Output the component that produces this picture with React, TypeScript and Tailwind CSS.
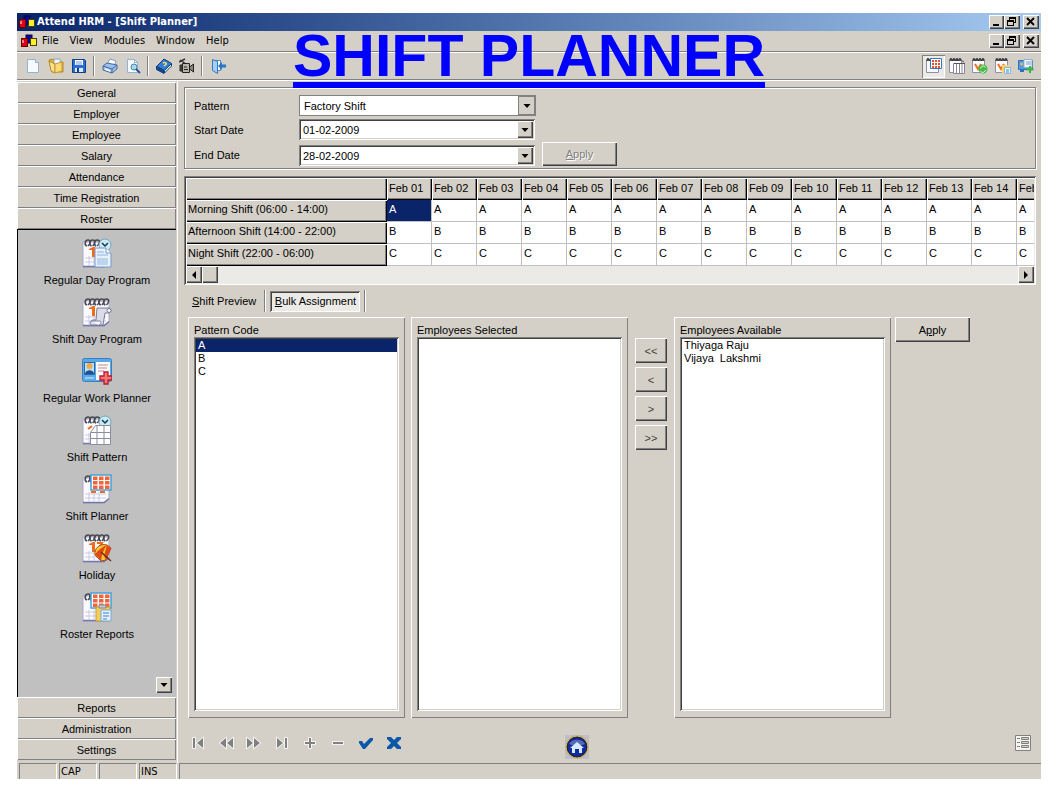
import { useState } from 'react'
import type { ReactNode } from 'react'

// bevels shared by the classic controls
const raised = 'bg-[#d4d0c8] shadow-[inset_1px_1px_0_#fff,inset_-1px_-1px_0_#404040,inset_-2px_-2px_0_#808080]'
const raisedThin = 'bg-[#d4d0c8] shadow-[inset_1px_1px_0_#fff,inset_-1px_-1px_0_#808080]'
const sunken = 'bg-white shadow-[inset_1px_1px_0_#808080,inset_-1px_-1px_0_#fff,inset_2px_2px_0_#404040,inset_-2px_-2px_0_#d4d0c8]'

const topModules = ['General', 'Employer', 'Employee', 'Salary', 'Attendance', 'Time Registration', 'Roster']
const bottomModules = ['Reports', 'Administration', 'Settings']

const days = ['01', '02', '03', '04', '05', '06', '07', '08', '09', '10', '11', '12', '13', '14', '15']

const shifts = [
    { name: 'Morning Shift (06:00 - 14:00)', code: 'A' },
    { name: 'Afternoon Shift (14:00 - 22:00)', code: 'B' },
    { name: 'Night Shift (22:00 - 06:00)', code: 'C' },
]

/* ---------- ICONS ---------- */

function AppIcon({ size }: { size: number }) {
    return (
        <svg width={size} height={size} viewBox="0 0 16 16">
            <rect x="5" y="2" width="6" height="8" fill="#00009c" stroke="#000040" />
            <rect x="0.500" y="5.500" width="6" height="8" fill="#e00010" stroke="#600" />
            <path d="M2 7v3" stroke="#fff" />
            <rect x="9.500" y="5.500" width="6" height="7" fill="#ffee30" stroke="#404000" />
        </svg>
    )
}

function Spirals({ count = 5 }: { count?: number }) {
    return (
        <g fill="none" stroke="#4a4a55" strokeWidth="1.600">
            {Array.from({ length: count }, (_, i) => (
                <path key={i} d={`M${5 + i * 4.600} 8c-3-1-2-6 1-6s3 3 0 6`} />
            ))}
        </g>
    )
}

function CalendarBase({ spirals = 5, digit = true }: { spirals?: number; digit?: boolean }) {
    return (
        <>
            <path d="M1 4h26v21l-4 4H1z" fill="#fbfbff" stroke="#a9a9c6" />
            <path d="M1 28.500h21l5-4" fill="none" stroke="#7378a8" strokeWidth="1.500" />
            <path d="M3 20h21M3 24h21M7 18v10M12 18v10M17 18v10" stroke="#c9c9e4" />
            {digit && <path d="M7 11l4-2h2v10h-3v-7H7z" fill="#f26a1b" />}
            <Spirals count={spirals} />
        </>
    )
}

function RedGrid() {
    return (
        <>
            <rect x="9" y="1" width="20" height="15" fill="#fff" stroke="#45a0dc" strokeWidth="1.500" />
            {[0, 1, 2].map((r) =>
                [0, 1, 2].map((c) => (
                    <rect key={`${r}${c}`} x={11 + c * 6} y={2.500 + r * 4.500} width="4.500" height="3.500" fill="#f0653c" />
                ))
            )}
        </>
    )
}

function Clock() {
    return (
        <>
            <circle cx="23" cy="7" r="6" fill="#c9ecf4" stroke="#74a6bd" />
            <path d="M20 5l3 3 3-3" fill="none" stroke="#183848" strokeWidth="1.500" />
        </>
    )
}

function Big({ children }: { children: ReactNode }) {
    return <svg width="30" height="30" viewBox="0 0 30 30">{children}</svg>
}

function RegularDayIcon() {
    return (
        <Big>
            <CalendarBase spirals={3} />
            <Clock />
            <path d="M13 10h11l5 5v14H13z" fill="#e8f2fc" stroke="#7898c8" />
            <path d="M24 10v5h5" fill="#fff" stroke="#7898c8" />
            <path d="M15 14h7M15 17h11" stroke="#8fb2dc" />
            <rect x="15" y="20" width="11" height="7" fill="#bdd4ee" />
        </Big>
    )
}

function ShiftDayIcon() {
    return (
        <Big>
            <CalendarBase />
            <path d="M15 11h12c3 1 2 5-1 5h-3l-2 12H9c-2-2 0-5 2-5h3z" fill="#dcdce8" stroke="#777b98" />
            <circle cx="27" cy="13.500" r="2" fill="#fff" stroke="#777b98" />
            <path d="M9 24h9c2 1 1 3-1 4" fill="#f8f8ff" stroke="#777b98" />
        </Big>
    )
}

function WorkPlannerIcon() {
    return (
        <Big>
            <rect x="0.500" y="2.500" width="29" height="23" rx="2" fill="#5aa9e6" stroke="#3b7fc0" />
            <rect x="14" y="6" width="14" height="18" fill="#f6fbff" />
            <rect x="2.500" y="6.500" width="10" height="12" fill="#b9e1fa" stroke="#2d69a8" />
            <circle cx="7.500" cy="10" r="3" fill="#f0a848" />
            <path d="M3 18c0-5 9-5 9 0z" fill="#234f8c" />
            <path d="M16 9h10M16 12h9M16 15h6" stroke="#c88" />
            <path d="M3 22h9" stroke="#d8f0ff" />
            <path d="M22 16h4v4h4v4h-4v4h-4v-4h-4v-4h4z" fill="#f07878" stroke="#c01828" strokeWidth="1.300" />
        </Big>
    )
}

function ShiftPatternIcon() {
    return (
        <Big>
            <CalendarBase spirals={3} digit={false} />
            <path d="M6 14l4-3" stroke="#f26a1b" strokeWidth="2" />
            <Clock />
            <path d="M8.500 17.500l5-7h15v19h-20z" fill="#fff" stroke="#8c8ca0" />
            <path d="M9 17.500h19M9 23.500h19M15 11v18M22 11v18" stroke="#8c8ca0" />
        </Big>
    )
}

function ShiftPlannerIcon() {
    return (
        <Big>
            <CalendarBase spirals={2} digit={false} />
            <path d="M9 18h5M18 18h5" stroke="#f26a1b" strokeWidth="2" />
            <RedGrid />
        </Big>
    )
}

function HolidayIcon() {
    return (
        <Big>
            <CalendarBase />
            <path d="M15 10h5l-4 7" fill="none" stroke="#f26a1b" strokeWidth="2" />
            <path d="M13 22c-1-7 5-12 12-10l4 3-5 12-5 1z" fill="#f6c832" stroke="#a84810" />
            <path d="M13 22c2-4 7-8 12-10-3 4-5 8-6 16l-3-4zM25 12l4 3-5 12-2-4z" fill="#e04818" />
            <path d="M19 19l10 9" stroke="#703010" strokeWidth="1.500" />
        </Big>
    )
}

function RosterReportsIcon() {
    return (
        <Big>
            <CalendarBase spirals={2} digit={false} />
            <RedGrid />
            <path d="M14 15h14v14H14z" fill="#f0cf60" stroke="#c8a030" />
            <path d="M17 13h7v3h-7z" fill="#c8c8d0" stroke="#888" />
            <path d="M19 18h10v11H19z" fill="#e6f3ff" stroke="#78a8d8" />
            <path d="M21 21h6M21 24h6M21 27h4" stroke="#3c7cc8" />
        </Big>
    )
}

const rosterItems = [
    { icon: RegularDayIcon, label: 'Regular Day Program' },
    { icon: ShiftDayIcon, label: 'Shift Day Program' },
    { icon: WorkPlannerIcon, label: 'Regular Work Planner' },
    { icon: ShiftPatternIcon, label: 'Shift Pattern' },
    { icon: ShiftPlannerIcon, label: 'Shift Planner' },
    { icon: HolidayIcon, label: 'Holiday' },
    { icon: RosterReportsIcon, label: 'Roster Reports' },
]

function Small({ children }: { children: ReactNode }) {
    return <svg width="16" height="16" viewBox="0 0 16 16">{children}</svg>
}

const newIcon = (
    <Small>
        <path d="M2.500 1.500h8l3 3v10h-11z" fill="#f7fbff" stroke="#8fb4d8" />
        <path d="M10.500 1.500v3h3" fill="#cfe2f4" stroke="#8fb4d8" />
    </Small>
)
const openIcon = (
    <Small>
        <path d="M1 2l4-1 2 3h8v10H4z" fill="#e3b33c" stroke="#b58a28" />
        <path d="M6 1h6l1 9H6z" fill="#eef5fc" stroke="#88a8c8" />
        <path d="M1 3l6 3v9l-4-2z" fill="#fbe08a" stroke="#b58a28" />
        <path d="M7 6l7-2v9l-7 2z" fill="#f8da78" stroke="#c89a30" />
    </Small>
)
const saveIcon = (
    <Small>
        <path d="M1.500 1.500h12l1 1v12h-13z" fill="#2c6fd0" stroke="#123f8c" />
        <path d="M4 2h8v5H4z" fill="#fff" />
        <path d="M5 4h6M5 6h6" stroke="#6f9cd8" />
        <path d="M4 10h8v4H4z" fill="#dceaff" />
        <path d="M6 10h2v4H6z" fill="#123f8c" />
    </Small>
)
const printIcon = (
    <Small>
        <path d="M5 6l3-5 6 2-2 5z" fill="#fff" stroke="#7f9cc0" />
        <path d="M1 8l4-3 10 2v4l-5 4-9-3z" fill="#9fc0ea" stroke="#41699f" />
        <path d="M1 8l9 3 5-4M10 11v4" fill="none" stroke="#41699f" />
        <path d="M3 11l5 2" stroke="#fff" strokeWidth="1.500" />
    </Small>
)
const previewIcon = (
    <Small>
        <path d="M2.500 1.500h7l3 3v10h-10z" fill="#f5faff" stroke="#8fb4d8" />
        <path d="M9.500 1.500v3h3" fill="none" stroke="#8fb4d8" />
        <circle cx="9" cy="9" r="3" fill="#a9d8e8" stroke="#4884a8" />
        <path d="M11 11l4 4" stroke="#2b50a0" strokeWidth="2" />
    </Small>
)
const bookIcon = (
    <Small>
        <path d="M0.500 8.500L8 1l7.500 4.500-7 7z" fill="#2f7dd4" stroke="#103c78" />
        <path d="M0.500 8.500v3l7.500 4v-3z" fill="#154a90" stroke="#103c78" />
        <path d="M8.500 12.500l7-7v2.500l-7 7z" fill="#f4f4e8" stroke="#103c78" />
        <path d="M7 5c2-1 4 0 3 1.500L8 8" fill="none" stroke="#ffe060" strokeWidth="1.500" />
    </Small>
)
const cameraIcon = (
    <Small>
        <path d="M0 4l6-3M1 2l6 4" stroke="#333" strokeWidth="1.500" />
        <path d="M3.500 5.500h7v9h-7z" fill="#b8b4a8" stroke="#222" />
        <path d="M10.500 9l4-3v8l-4-3z" fill="#888478" stroke="#222" />
        <path d="M1 7h2v6H1zM5 9h3M5 11.500h4" fill="#555" stroke="#222" />
    </Small>
)
const exitIcon = (
    <Small>
        <path d="M2.500 2.500h8v10h-8z" fill="#fff" stroke="#4d88c8" />
        <path d="M2.500 1.500l5 2v12l-5-3z" fill="#a6cdf2" stroke="#3c78bc" />
        <path d="M8 8l4-4v2.500h4v3h-4V12z" fill="#2775cc" />
    </Small>
)

function Page({ children }: { children?: ReactNode }) {
    return (
        <Small>
            <path d="M0.500 2.500h12v12h-12z" fill="#fafaff" stroke="#9090a8" />
            <path d="M1 3c0-3 2-3 2 0M4 3c0-3 2-3 2 0M7 3c0-3 2-3 2 0M10 3c0-3 2-3 2 0" fill="none" stroke="#333" strokeWidth="1.300" />
            {children}
        </Small>
    )
}

const viewIcons = [
    {
        label: 'Shift planner view',
        icon: (
            <Page>
                <path d="M4.500 0.500h11v10h-11z" fill="#fff" stroke="#2b7cc4" />
                <path d="M6 2h2v2H6zM9 2h2v2H9zM12 2h2v2h-2zM6 5h2v2H6zM9 5h2v2H9zM12 5h2v2h-2zM6 8h2v2H6zM9 8h2v2H9zM12 8h2v2h-2z" fill="#e8502c" />
            </Page>
        ),
    },
    {
        label: 'Shift pattern view',
        icon: (
            <Page>
                <path d="M4.500 5.500h11v10h-11zM7.500 6v9M10.500 6v9M13 6v9" fill="#fff" stroke="#858595" />
                <path d="M10 1l5 3M5 5.500h11" stroke="#555" />
            </Page>
        ),
    },
    {
        label: 'Refresh roster',
        icon: (
            <Page>
                <path d="M3 6l3 5 3-5" fill="none" stroke="#f07020" strokeWidth="2" />
                <circle cx="11" cy="11" r="4.500" fill="#48b848" />
                <path d="M8.500 10.500c1-3 4-3 5-1M13.500 12c-1 3-4 3-5 1" fill="none" stroke="#e8ffe8" />
            </Page>
        ),
    },
    {
        label: 'Roster report',
        icon: (
            <Page>
                <path d="M3 6l3 5 3-5" fill="none" stroke="#f07020" strokeWidth="2" />
                <path d="M7 7h7v8H7z" fill="#f5d468" />
                <path d="M9.500 9.500h6v6h-6z" fill="#eef7ff" stroke="#88b4e0" />
                <path d="M11 12h3M11 14h3" stroke="#4484c8" />
            </Page>
        ),
    },
    {
        label: 'Add work plan',
        icon: (
            <Small>
                <path d="M0.500 2.500h14v9H0.500z" fill="#4c9ce0" stroke="#2d70b4" />
                <path d="M6 1.500h8v8H6z" fill="#f4f9ff" stroke="#90b0d0" />
                <path d="M8 4h5M8 6h5" stroke="#7098c8" />
                <circle cx="3.500" cy="6" r="1.500" fill="#f0b060" />
                <path d="M2 12h4v2H2z" fill="#2d70b4" />
                <path d="M12 8v7M8.500 11.500h7" stroke="#38b838" strokeWidth="2" />
            </Small>
        ),
    },
]

const fileTools = [
    [
        { label: 'New', icon: newIcon },
        { label: 'Open', icon: openIcon },
        { label: 'Save', icon: saveIcon },
    ],
    [
        { label: 'Print', icon: printIcon },
        { label: 'Preview', icon: previewIcon },
    ],
    [
        { label: 'Help contents', icon: bookIcon },
        { label: 'Demo', icon: cameraIcon },
    ],
    [{ label: 'Exit', icon: exitIcon }],
]

const recordTools = [
    { label: 'First', d: 'M3 3h2v10H3zM13 3v10L7 8z' },
    { label: 'Previous', d: 'M8 3v10L2 8zM15 3v10L9 8z' },
    { label: 'Next', d: 'M1 3v10l6-5zM8 3v10l6-5z' },
    { label: 'Last', d: 'M3 3v10l6-5zM11 3h2v10h-2z' },
    { label: 'Add', d: 'M7 3h2v4h4v2H9v4H7V9H3V7h4z' },
    { label: 'Remove', d: 'M3 7h10v2H3z' },
]

/* ---------- CONTROLS ---------- */

function WindowButtons() {
    return (
        <div className="flex">
            <button aria-label="Minimize" className={`flex h-[14px] w-[15px] ${raised}`}>
                <svg width="15" height="14" viewBox="0 0 15 14"><path d="M4 9h6v2H4z" /></svg>
            </button>
            <button aria-label="Restore" className={`flex h-[14px] w-4 ${raised}`}>
                <svg width="16" height="14" viewBox="0 0 16 14">
                    <path d="M5 2h7v6h-2V7h1V4H6v1H5z" />
                    <path d="M3 5h7v6H3zM4 7v3h5V7z" fillRule="evenodd" />
                </svg>
            </button>
            <button aria-label="Close" className={`ml-[3px] flex h-[14px] w-4 ${raised}`}>
                <svg width="16" height="14" viewBox="0 0 16 14">
                    <path d="M4 3l7 7M11 3l-7 7" stroke="#000" strokeWidth="1.800" />
                </svg>
            </button>
        </div>
    )
}

function DownArrow() {
    return (
        <svg width="8" height="4" viewBox="0 0 8 4"><path d="M0.500 0h7L4 4z" /></svg>
    )
}

function DateField({ id, value }: { id: string; value: string }) {
    return (
        <div className={`flex h-[21px] w-[236px] p-[2px] ${sunken}`}>
            <input id={id} defaultValue={value} className="min-w-0 flex-1 bg-transparent px-[2px] outline-none" />
            <button aria-label="Open calendar" className={`flex w-4 items-center justify-center ${raised}`}>
                <DownArrow />
            </button>
        </div>
    )
}

function ListPanel({ title, items, selected }: { title: string; items: string[]; selected?: string }) {
    return (
        <section className={`flex w-[217px] flex-col p-[6px] pb-[7px] ${raisedThin}`}>
            <h2 className="h-[14px] leading-[15px]">{title}</h2>
            <ul role="listbox" aria-label={title} className={`flex-1 p-[2px] ${sunken}`}>
                {items.map((item) => (
                    <li
                        key={item}
                        role="option"
                        aria-selected={item === selected}
                        className={`h-[13px] whitespace-pre px-[2px] leading-[13px] ${item === selected ? 'bg-[#0a246a] text-white' : ''}`}
                    >
                        {item}
                    </li>
                ))}
            </ul>
        </section>
    )
}

function ModuleButton({ label }: { label: string }) {
    return (
        <button className={`h-[21px] w-full shrink-0 text-center ${raisedThin}`}>{label}</button>
    )
}

function Sidebar() {
    return (
        <nav className="flex w-[159px] shrink-0 flex-col pt-px pb-[3px]">
            {topModules.map((label) => <ModuleButton key={label} label={label} />)}
            <div className="flex flex-1 flex-col border-t border-l border-black bg-[#c0c0c0] pt-2 pb-1">
                <div className="flex flex-col items-center gap-[9px]">
                    {rosterItems.map((item) => (
                        <button key={item.label} className="flex flex-col items-center gap-1">
                            <item.icon />
                            <span className="leading-4">{item.label}</span>
                        </button>
                    ))}
                </div>
                <button aria-label="Scroll down" className={`mt-auto mr-1 flex h-4 w-4 items-center justify-center self-end ${raised}`}>
                    <DownArrow />
                </button>
            </div>
            {bottomModules.map((label) => <ModuleButton key={label} label={label} />)}
        </nav>
    )
}

function ShiftGrid() {
    return (
        <div className="mr-[5px] bg-[#eceae6] p-[2px] shadow-[inset_1px_1px_0_#808080,inset_-1px_-1px_0_#fff,inset_2px_2px_0_#404040]">
            <div className="overflow-hidden bg-white">
                <table className="w-[876px] table-fixed border-separate border-spacing-0 text-left">
                    <colgroup>
                        <col className="w-[201px]" />
                        {days.map((d) => <col key={d} className="w-[45px]" />)}
                    </colgroup>
                    <thead>
                        <tr>
                            <th aria-label="Shift" className="h-[22px] bg-[#d4d0c8] p-0 shadow-[inset_1px_1px_0_#fff,inset_-1px_-1px_0_#000,inset_-2px_-2px_0_#808080]" />
                            {days.map((d) => (
                                <th key={d} className="h-[22px] bg-[#d4d0c8] p-0 pb-[3px] pl-[2px] font-normal whitespace-nowrap shadow-[inset_1px_1px_0_#fff,inset_-1px_-1px_0_#000,inset_-2px_-2px_0_#808080]">
                                    {`Feb ${d}`}
                                </th>
                            ))}
                        </tr>
                    </thead>
                    <tbody>
                        {shifts.map((shift, row) => (
                            <tr key={shift.code}>
                                <th className="h-[22px] bg-[#d4d0c8] p-0 pb-[4px] pl-[2px] font-normal shadow-[inset_1px_1px_0_#fff,inset_-1px_-1px_0_#000,inset_-2px_-2px_0_#808080]">
                                    {shift.name}
                                </th>
                                {days.map((d, col) => (
                                    <td
                                        key={d}
                                        className={`h-[22px] border-r border-b border-[#c0c0c0] p-0 pb-[3px] pl-[2px] ${row === 0 && col === 0 ? 'bg-[#0a246a] text-white' : ''}`}
                                    >
                                        {shift.code}
                                    </td>
                                ))}
                            </tr>
                        ))}
                    </tbody>
                </table>
            </div>
            <div className="flex h-[17px]">
                <button aria-label="Scroll left" className={`flex w-4 items-center justify-center ${raised}`}>
                    <svg width="4" height="8" viewBox="0 0 4 8"><path d="M4 0v8L0 4z" /></svg>
                </button>
                <div className={`w-4 ${raised}`} />
                <button aria-label="Scroll right" className={`ml-auto flex w-4 items-center justify-center ${raised}`}>
                    <svg width="4" height="8" viewBox="0 0 4 8"><path d="M0 0v8l4-4z" /></svg>
                </button>
            </div>
        </div>
    )
}

export default function App() {
    const [pattern, setPattern] = useState('Factory Shift')

    return (
        <div className="relative flex min-h-screen flex-col bg-white px-[17px] pt-[13px] pb-[14px] font-['Liberation_Sans',Arial,sans-serif] text-[11px] leading-[14px] text-black">
            <div className="flex flex-1 flex-col bg-[#d4d0c8]">
                {/* TITLE BAR */}
                <header className="flex h-[18px] items-center bg-linear-to-r from-[#0a246a] to-[#a6caf0] pr-[2px] pl-[2px]">
                    <AppIcon size={16} />
                    <span className="ml-[2px] flex-1 font-['DejaVu_Sans_Condensed','DejaVu_Sans',sans-serif] font-bold text-white">
                        Attend HRM - [Shift Planner]
                    </span>
                    <WindowButtons />
                </header>

                {/* MENU */}
                <div className="flex h-5 items-center pr-[2px] pl-1 font-['DejaVu_Sans_Condensed','DejaVu_Sans',sans-serif]">
                    <AppIcon size={16} />
                    <div className="ml-[5px] flex flex-1 gap-[11px]">
                        {['File', 'View', 'Modules', 'Window', 'Help'].map((m) => <button key={m}>{m}</button>)}
                    </div>
                    <WindowButtons />
                </div>

                {/* TOOLBAR */}
                <div className="flex h-[30px] items-center justify-between border-t border-b border-t-[#808080] border-b-white px-1 shadow-[inset_0_1px_0_#fff,inset_0_-1px_0_#808080]">
                    <div className="flex items-center">
                        {fileTools.map((group, i) => (
                            <div key={i} className="flex items-center">
                                {i > 0 && <div className="mx-[3px] h-5 w-[2px] border-r border-l border-r-white border-l-[#808080]" />}
                                {group.map((tool) => (
                                    <button key={tool.label} aria-label={tool.label} className="flex h-[23px] w-[23px] items-center justify-center">
                                        {tool.icon}
                                    </button>
                                ))}
                            </div>
                        ))}
                    </div>
                    <div className="flex items-center">
                        {viewIcons.map((view, i) => (
                            <button
                                key={view.label}
                                aria-label={view.label}
                                className={`flex h-[23px] w-[23px] items-center justify-center ${i === 0 ? 'bg-[#eceae6] shadow-[inset_1px_1px_0_#808080,inset_-1px_-1px_0_#fff]' : ''}`}
                            >
                                {view.icon}
                            </button>
                        ))}
                    </div>
                </div>

                <div className="flex flex-1">
                    <Sidebar />

                    {/* MAIN */}
                    <main className="ml-px flex min-w-0 flex-1 flex-col border-l border-white pt-[6px] pl-[6px]">
                        <div className="mr-[5px] border border-[#808080] pt-[7px] pb-[2px] pl-[9px] shadow-[inset_1px_1px_0_#fff,1px_1px_0_#fff]">
                            <div className="flex items-center">
                                <label htmlFor="pattern" className="w-[105px]">Pattern</label>
                                <div className="relative h-[21px] w-[237px] border border-[#808080] bg-white">
                                    <select
                                        id="pattern"
                                        value={pattern}
                                        onChange={(e) => setPattern(e.target.value)}
                                        className="h-full w-full appearance-none bg-transparent pl-1 outline-none"
                                    >
                                        <option>Factory Shift</option>
                                    </select>
                                    <span className="pointer-events-none absolute inset-y-0 right-0 flex w-[17px] items-center justify-center border border-[#808080] bg-[#d4d0c8]">
                                        <DownArrow />
                                    </span>
                                </div>
                            </div>
                            <div className="mt-[3px] flex items-center">
                                <label htmlFor="start" className="w-[105px]">Start Date</label>
                                <DateField id="start" value="01-02-2009" />
                            </div>
                            <div className="mt-[2px] flex items-end">
                                <label htmlFor="end" className="w-[105px] leading-[21px]">End Date</label>
                                <DateField id="end" value="28-02-2009" />
                                <button
                                    disabled
                                    className={`ml-[7px] h-6 w-[75px] text-[#808080] [text-shadow:1px_1px_0_#fff] ${raised}`}
                                >
                                    <u>A</u>pply
                                </button>
                            </div>
                        </div>

                        <div className="mt-[7px]">
                            <ShiftGrid />
                        </div>

                        {/* TABS */}
                        <div role="tablist" className="mt-[5px] flex h-[22px] items-center">
                            <button role="tab" aria-selected="false" className="w-20 pl-2 text-left whitespace-nowrap">
                                <u>S</u>hift Preview
                            </button>
                            <div className="h-full w-[2px] border-r border-l border-r-white border-l-[#808080]" />
                            <button
                                role="tab"
                                aria-selected="true"
                                className="mx-1 h-[21px] w-[90px] bg-[#eceae6] pl-px whitespace-nowrap shadow-[inset_1px_1px_0_#808080,inset_-1px_-1px_0_#fff,inset_2px_2px_0_#404040]"
                            >
                                <u>B</u>ulk Assignment
                            </button>
                            <div className="h-full w-[2px] border-r border-l border-r-white border-l-[#808080]" />
                        </div>

                        {/* BULK ASSIGNMENT */}
                        <div className="mt-[5px] ml-1 flex flex-1">
                            <ListPanel title="Pattern Code" items={['A', 'B', 'C']} selected="A" />
                            <div className="ml-[6px] flex">
                                <ListPanel title="Employees Selected" items={[]} />
                            </div>
                            <div className="mx-[7px] flex flex-col gap-1 pt-[21px] text-[#404040]">
                                {['<<', '<', '>', '>>'].map((sign) => (
                                    <button key={sign} className={`h-[25px] w-8 ${raised}`}>{sign}</button>
                                ))}
                            </div>
                            <ListPanel title="Employees Available" items={['Thiyaga Raju', 'Vijaya  Lakshmi']} />
                            <button className={`ml-1 h-[25px] w-[75px] ${raised}`}>
                                A<u>p</u>ply
                            </button>
                        </div>

                        {/* RECORD NAVIGATION */}
                        <div className="flex h-[45px] items-start pt-[17px] pr-[10px]">
                            {recordTools.map((tool) => (
                                <button key={tool.label} aria-label={tool.label} className="flex w-7 justify-center">
                                    <svg width="16" height="16" viewBox="0 0 16 16">
                                        <path d={tool.d} fill="#fff" stroke="#fff" strokeWidth="1.500" />
                                        <path d={tool.d} fill="#808080" />
                                    </svg>
                                </button>
                            ))}
                            <button aria-label="Post" className="flex w-7 justify-center">
                                <svg width="16" height="16" viewBox="0 0 16 16">
                                    <path d="M1 8V6h3l2 3 6-6h3v2L7 14H5z" fill="#0b57a8" />
                                </svg>
                            </button>
                            <button aria-label="Cancel" className="flex w-7 justify-center">
                                <svg width="16" height="16" viewBox="0 0 16 16">
                                    <path d="M1 2h4l3 3 3-3h4v2l-4 4 4 4v2h-4l-3-3-3 3H1v-2l4-4-4-4z" fill="#0b57a8" />
                                </svg>
                            </button>
                            <button aria-label="Home" className="ml-[157px]">
                                <svg width="24" height="24" viewBox="0 0 24 24">
                                    <rect width="24" height="24" fill="#bebfc8" />
                                    <circle cx="12" cy="12" r="11" fill="#1428a0" stroke="#c8b468" strokeWidth="1.500" />
                                    <circle cx="12" cy="12" r="9.800" fill="none" stroke="#222" />
                                    <path d="M4 9a9 8 0 0 1 16 0c-5 2-11 2-16 0z" fill="#5a68b8" />
                                    <path d="M5 13l7-6 7 6h-2v5h-3v-4h-4v4H7v-5z" fill="#d4ecff" />
                                </svg>
                            </button>
                            <button aria-label="Form view" className="ml-auto">
                                <svg width="16" height="16" viewBox="0 0 16 16">
                                    <path d="M0.500 0.500h15v15H0.500z" fill="#f4f4f0" stroke="#808080" />
                                    <path d="M2 3.500h3M2 7.500h3M2 11.500h3" stroke="#808080" />
                                    <path d="M6.500 2.500h7v2h-7zM6.500 6.500h7v2h-7zM6.500 10.500h7v2h-7z" fill="#d4d0c8" stroke="#808080" />
                                </svg>
                            </button>
                        </div>
                    </main>
                </div>

                {/* STATUS BAR */}
                <footer className="flex h-4 gap-[2px] pl-[2px] font-['DejaVu_Sans_Condensed','DejaVu_Sans',sans-serif] leading-4">
                    {['', 'CAP', '', 'INS'].map((key, i) => (
                        <div key={i} className="w-[38px] border-t border-r border-l border-t-[#808080] border-r-white border-l-[#808080] pl-px">{key}</div>
                    ))}
                    <div className="flex-1 border-t border-l border-[#808080]" />
                </footer>
            </div>

            {/* SLIDE HEADING */}
            <h1 className="pointer-events-none absolute inset-x-0 top-6 text-center text-[59px] leading-[64px] font-bold text-[#0000ff] underline decoration-[6px] underline-offset-[6px]">
                SHIFT PLANNER
            </h1>
        </div>
    )
}
